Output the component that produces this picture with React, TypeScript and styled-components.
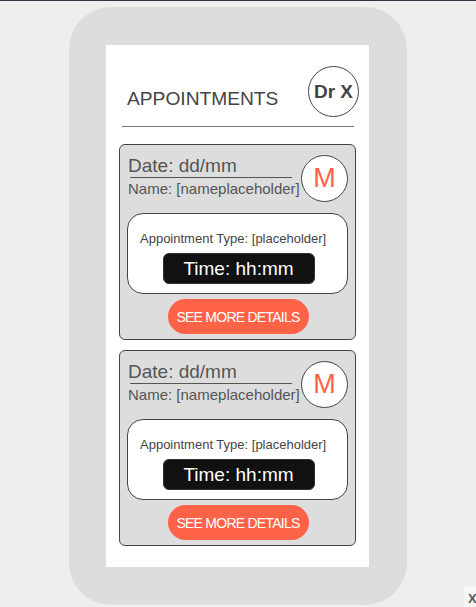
import React from "react";
import styled, { createGlobalStyle } from "styled-components";

const Global = createGlobalStyle`
  html, body {
    margin: 0;
    padding: 0;
    background: #eeeeee;
    font-family: "Liberation Sans", Arial, sans-serif;
  }
  body {
    border-top: 1px solid #2f3542;
    overflow: hidden;
  }
`;

const Page = styled.div`
  padding-top: 6px;
  display: flex;
  justify-content: center;
`;

const Phone = styled.div`
  width: 338px;
  box-sizing: border-box;
  padding: 38px 38px 38px 37px;
  background: #dddddd;
  border-radius: 42px;
`;

const Screen = styled.div`
  background: #ffffff;
  width: 263px;
  box-sizing: border-box;
  padding: 21px 0 21px;
  display: flex;
  flex-direction: column;
`;

const Header = styled.div`
  display: flex;
  align-items: flex-start;
  justify-content: space-between;
  padding: 0 10px 0 21px;
`;

const Title = styled.h1`
  margin: 22px 0 0;
  font-size: 19.2px;
  font-weight: 400;
  color: #444444;
  line-height: 22px;
`;

const Avatar = styled.div<{ $size: number; $color: string; $bold?: boolean; $font: number }>`
  width: ${(p) => p.$size}px;
  height: ${(p) => p.$size}px;
  flex: none;
  box-sizing: border-box;
  border: 1px solid #444444;
  border-radius: 50%;
  background: #ffffff;
  display: flex;
  align-items: center;
  justify-content: center;
  color: ${(p) => p.$color};
  font-size: ${(p) => p.$font}px;
  font-weight: ${(p) => (p.$bold ? 700 : 400)};
`;

const Divider = styled.hr`
  margin: 9px 15px 0 16px;
  border: none;
  border-top: 1px solid #777777;
  height: 0;
`;

const List = styled.div`
  display: flex;
  flex-direction: column;
  gap: 10px;
  margin: 17px 13px 0;
`;

const Card = styled.div`
  background: #dddddd;
  border: 1px solid #444444;
  border-radius: 6px;
  padding: 10px 7px 5px;
  display: flex;
  flex-direction: column;
  align-items: stretch;
`;

const TopRow = styled.div`
  display: flex;
  align-items: flex-start;
  justify-content: space-between;
  padding-left: 1px;
`;

const Info = styled.div`
  display: flex;
  flex-direction: column;
`;

const DateText = styled.div`
  font-size: 19px;
  line-height: 21px;
  color: #555555;
`;

const Underline = styled.div`
  margin: 1px 0 2px 2px;
  width: 162px;
  border-top: 1px solid #555555;
`;

const NameText = styled.div`
  font-size: 15px;
  line-height: 17px;
  color: #555555;
  white-space: nowrap;
`;

const Detail = styled.div`
  margin-top: 11px;
  background: #ffffff;
  border: 1px solid #444444;
  border-radius: 16px;
  padding: 17px 12px 9px;
  display: flex;
  flex-direction: column;
  align-items: center;
`;

const TypeText = styled.div`
  align-self: flex-start;
  font-size: 13px;
  line-height: 15px;
  color: #444444;
  white-space: nowrap;
`;

const TimePill = styled.div`
  margin-top: 7px;
  margin-left: 2px;
  width: 152px;
  height: 31px;
  box-sizing: border-box;
  background: #111111;
  border: 1px solid #333333;
  border-radius: 6px;
  color: #ffffff;
  font-size: 19px;
  display: flex;
  align-items: center;
  justify-content: center;
`;

const DetailsButton = styled.button`
  align-self: center;
  margin: 5px 0 0 1px;
  width: 141px;
  height: 35px;
  border: none;
  border-radius: 18px;
  background: #ff6347;
  color: #ffffff;
  font-family: "Liberation Sans", Arial, sans-serif;
  font-size: 14px;
  letter-spacing: -0.75px;
  padding: 0;
  cursor: pointer;
`;

const CloseTab = styled.div`
  position: fixed;
  left: 464px;
  top: 586px;
  width: 30px;
  height: 30px;
  box-sizing: border-box;
  padding: 5px 0 0 4px;
  background: #f6f6f6;
  color: #555555;
  font-size: 13px;
  font-weight: 700;
`;

const appointments = [1, 2];

export default function App() {
  return (
    <>
      <Global />
      <Page>
        <Phone>
          <Screen>
            <Header>
              <Title>APPOINTMENTS</Title>
              <Avatar $size={51} $color="#444444" $bold $font={19}>
                Dr X
              </Avatar>
            </Header>
            <Divider />
            <List>
              {appointments.map((id) => (
                <Card key={id}>
                  <TopRow>
                    <Info>
                      <DateText>Date: dd/mm</DateText>
                      <Underline />
                      <NameText>Name: [nameplaceholder]</NameText>
                    </Info>
                    <Avatar $size={47} $color="#ff6347" $font={27}>
                      M
                    </Avatar>
                  </TopRow>
                  <Detail>
                    <TypeText>Appointment Type: [placeholder]</TypeText>
                    <TimePill>Time: hh:mm</TimePill>
                  </Detail>
                  <DetailsButton>SEE MORE DETAILS</DetailsButton>
                </Card>
              ))}
            </List>
          </Screen>
        </Phone>
      </Page>
      <CloseTab>X</CloseTab>
    </>
  );
}
